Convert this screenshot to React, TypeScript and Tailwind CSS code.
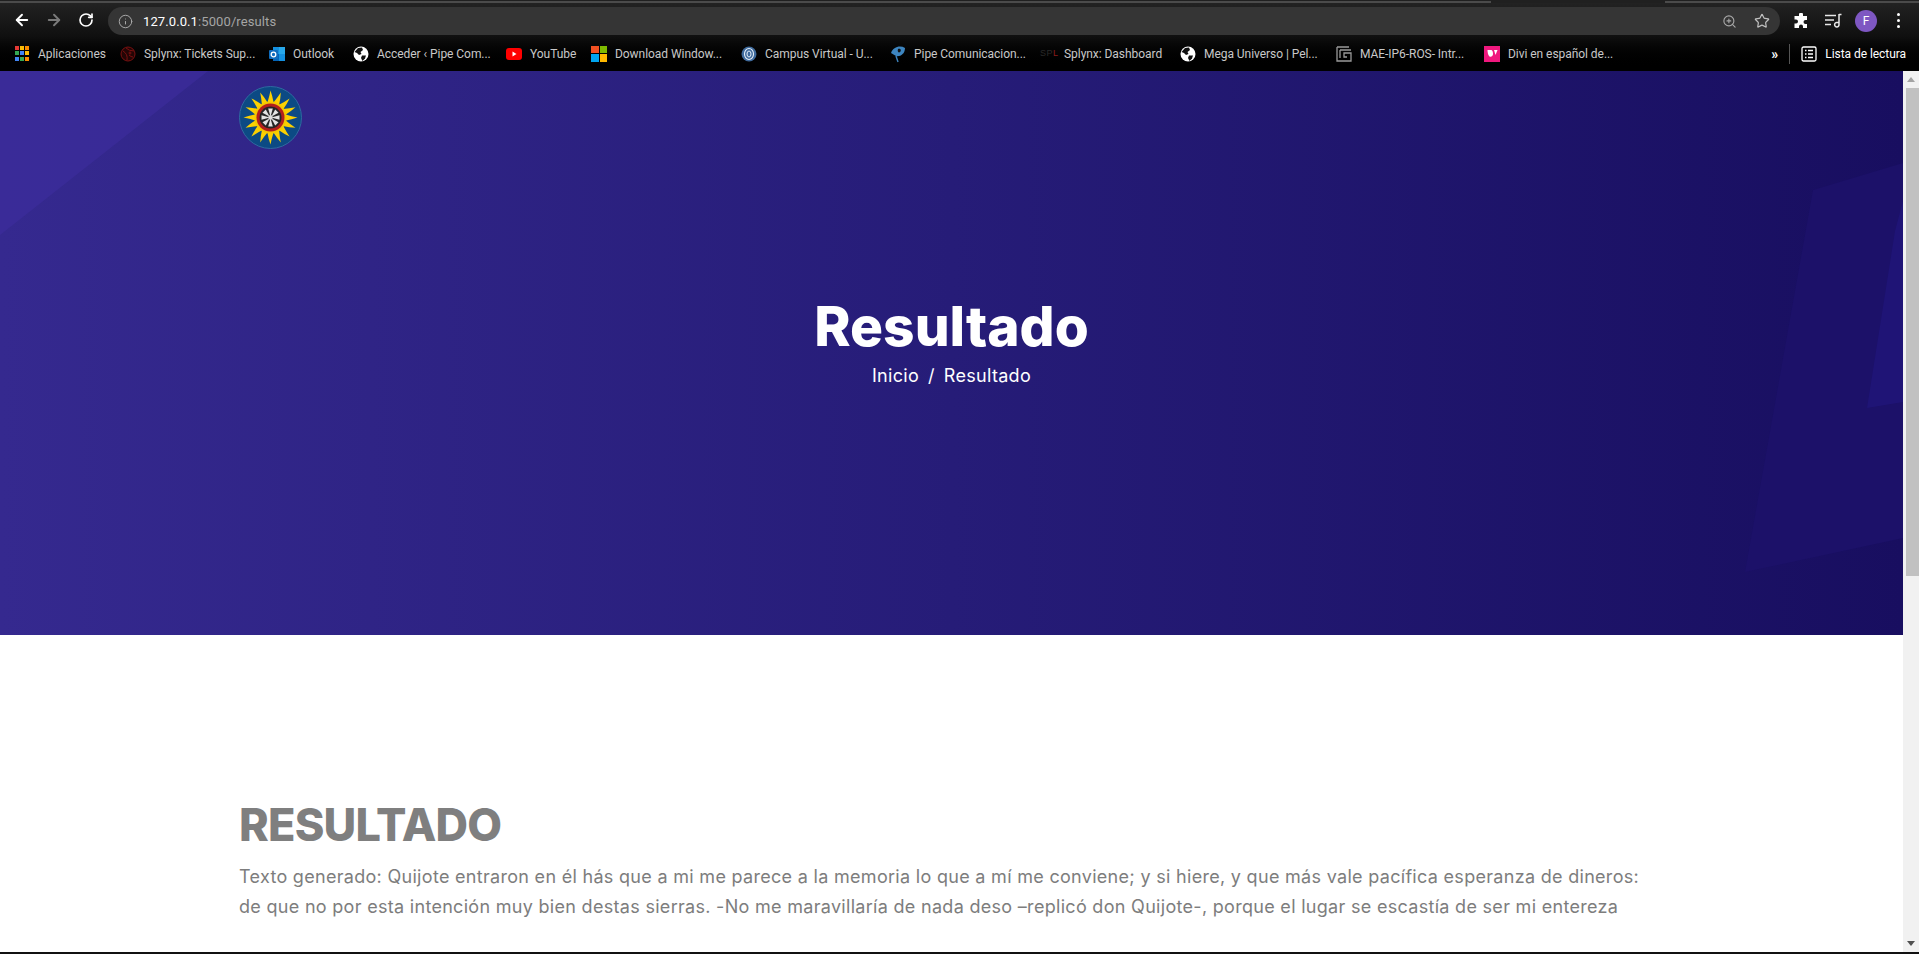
import { ArrowLeft, ArrowRight, RotateCw, Info, ZoomIn, Star } from "lucide-react";

const text = "font-['Roboto','Liberation_Sans',sans-serif]";

function GlobeIcon() {
  return (
    <svg width="16" height="16" viewBox="0 0 16 16">
      <circle cx="8" cy="8" r="7.5" fill="#fff" />
      <path d="M5 2 L9 1.5 L10 4 L7.5 6 L8.5 8 L6 9 L4 7 L1.5 6 Z" fill="#111" />
      <path d="M9 9.5 L13 9.5 L12 12.5 L9.5 15 L8 12 Z" fill="#111" />
    </svg>
  );
}

function AppsIcon() {
  const c = ["#e53935", "#fbbc05", "#fb8c00", "#34a853", "#4285f4", "#fbbc05", "#4285f4", "#34a853", "#fb8c00"];
  return (
    <div className="grid grid-cols-3 gap-[1px] w-[14px] h-[16px]">
      {c.map((x, i) => (
        <div key={i} className="w-[4px] h-[4px]" style={{ background: x }} />
      ))}
    </div>
  );
}

function SplynxIcon() {
  return (
    <svg width="16" height="16" viewBox="0 0 16 16" fill="none" stroke="#7a1010" strokeWidth="1">
      <circle cx="8" cy="8" r="7" fill="#230505" />
      <path d="M3 5 Q8 8 7 14 M6 2 Q9 5 14 5 M9 9 Q11 11 13 11" />
      <circle cx="10" cy="7" r="1" />
    </svg>
  );
}

function OutlookIcon() {
  return (
    <svg width="16" height="16" viewBox="0 0 16 16">
      <rect x="4" y="1" width="12" height="14" fill="#1490df" />
      <rect x="10" y="1" width="6" height="7" fill="#28a8ea" />
      <rect x="4" y="8" width="6" height="7" fill="#0364b8" />
      <rect x="0" y="4" width="9" height="9" rx="1" fill="#0f6cbd" />
      <circle cx="4.5" cy="8.5" r="2.3" fill="none" stroke="#fff" strokeWidth="1.3" />
    </svg>
  );
}

function YoutubeIcon() {
  return (
    <svg width="16" height="16" viewBox="0 0 16 16">
      <rect x="0" y="2" width="16" height="12" rx="3" fill="#f00" />
      <path d="M6.5 5.5 L10.5 8 L6.5 10.5 Z" fill="#fff" />
    </svg>
  );
}

function MsIcon() {
  return (
    <div className="grid grid-cols-2 gap-[1px] w-[16px] h-[16px]">
      <div className="bg-[#f25022]" />
      <div className="bg-[#7fba00]" />
      <div className="bg-[#00a4ef]" />
      <div className="bg-[#ffb900]" />
    </div>
  );
}

function CampusIcon() {
  return (
    <svg width="16" height="16" viewBox="0 0 16 16" fill="none">
      <circle cx="8" cy="8" r="7.5" fill="#3f6a9c" />
      <ellipse cx="8" cy="8" rx="4.5" ry="5.5" stroke="#e4eef8" strokeWidth="1.1" />
      <ellipse cx="8" cy="8" rx="2" ry="3" stroke="#e4eef8" strokeWidth="1" />
    </svg>
  );
}

function PipeIcon() {
  return (
    <svg width="16" height="18" viewBox="0 0 16 18" fill="none">
      <path d="M1 8 C3 2 10 0 15 3 C15 9 10 12 6 11 Z" fill="#3d85c0" />
      <path d="M8 4 C10 3 12 5 10 7 C9 8 7 7 8 4 Z" fill="#111" />
      <path d="M6 11 L8 17" stroke="#3d85c0" strokeWidth="1.4" />
    </svg>
  );
}

function SplIcon() {
  return (
    <span className="w-[16px] text-[9px] leading-none tracking-[0.5px] font-['Liberation_Sans',sans-serif]">
      <span className="text-[#2a2a2a]">SP</span>
      <span className="text-[#8a1c1c]">L</span>
    </span>
  );
}

function MaeIcon() {
  return (
    <svg width="16" height="16" viewBox="0 0 16 16" fill="none" stroke="#9a9a9a" strokeWidth="1.3">
      <path d="M1 1 H13 M1 1 V15 H15 V7 H8 V11 H11 M4 4 H15 M4 4 V12" />
    </svg>
  );
}

function DiviIcon() {
  return (
    <div className="w-[16px] h-[16px] bg-[#f0187e] flex items-center justify-center">
      <svg width="11" height="9" viewBox="0 0 11 9">
        <path d="M0.5 1 L4 1 C5.5 1 6 3 6 5 C6 7 4 8.5 2.5 7.5 C1 6.5 0.5 3 0.5 1 Z" fill="#fff" />
        <path d="M7 1 L10.5 1 L8.5 6 Z" fill="#fff" />
      </svg>
    </div>
  );
}

const bookmarks: { icon: React.ReactNode; label: string; w: string }[] = [
  { icon: <AppsIcon />, label: "Aplicaciones", w: "w-[106px]" },
  { icon: <SplynxIcon />, label: "Splynx: Tickets Sup...", w: "w-[149px]" },
  { icon: <OutlookIcon />, label: "Outlook", w: "w-[84px]" },
  { icon: <GlobeIcon />, label: "Acceder ‹ Pipe Com...", w: "w-[153px]" },
  { icon: <YoutubeIcon />, label: "YouTube", w: "w-[85px]" },
  { icon: <MsIcon />, label: "Download Window...", w: "w-[150px]" },
  { icon: <CampusIcon />, label: "Campus Virtual - U...", w: "w-[149px]" },
  { icon: <PipeIcon />, label: "Pipe Comunicacion...", w: "w-[150px]" },
  { icon: <SplIcon />, label: "Splynx: Dashboard", w: "w-[140px]" },
  { icon: <GlobeIcon />, label: "Mega Universo | Pel...", w: "w-[156px]" },
  { icon: <MaeIcon />, label: "MAE-IP6-ROS- Intr...", w: "w-[148px]" },
  { icon: <DiviIcon />, label: "Divi en español de...", w: "w-[130px]" },
];

function Logo() {
  const rays = Array.from({ length: 16 }, (_, i) => (i * 360) / 16);
  const spokes = Array.from({ length: 8 }, (_, i) => (i * 360) / 8);
  return (
    <svg width="63" height="63" viewBox="0 0 63 63">
      <circle cx="31.5" cy="31.5" r="31" fill="#0c4a84" stroke="#2f6aa0" strokeWidth="1" />
      {rays.map((r) => (
        <path key={r} d="M28.3 17 Q30.5 10 31.5 4.5 Q33.5 10 34.7 17 Z" fill="#fbd000" transform={`rotate(${r} 31.5 31.5)`} />
      ))}
      <circle cx="31.5" cy="31.5" r="16" fill="#f5c800" />
      <circle cx="31.5" cy="31.5" r="14" fill="#b3201c" />
      <circle cx="31.5" cy="31.5" r="11" fill="#262626" />
      {spokes.map((r) => (
        <path key={r} d="M31 29 L29.2 22.5 L33.8 22.5 L32 29 Z" fill="#e4e4e4" transform={`rotate(${r} 31.5 31.5)`} />
      ))}
      <circle cx="31.5" cy="31.5" r="2.4" fill="#dcdcdc" />
    </svg>
  );
}

export default function App() {
  return (
    <div className="w-[1919px] h-[954px] overflow-hidden flex flex-col bg-black">
      {/* top strip */}
      <div className="h-[3px] flex bg-[#202020]">
        <div className="w-[1491px] h-[2px] mt-[1px] bg-[#4b4b4b]" />
        <div className="w-[174px]" />
        <div className="flex-1 h-[2px] mt-[1px] bg-[#4b4b4b]" />
      </div>

      {/* toolbar */}
      <div className={`h-[33px] flex items-center pl-[13px] bg-gradient-to-b from-[#222222] to-[#101010] ${text}`}>
        <ArrowLeft size={18} strokeWidth={2.5} className="text-white" />
        <ArrowRight size={18} strokeWidth={2.5} className="text-[#7a7a7a] ml-[14px]" />
        <RotateCw size={16} strokeWidth={2.5} className="text-white ml-[15px]" />
        <div className="ml-[14px] w-[1672px] h-[28px] mt-[3px] rounded-full bg-[#353535] flex items-center pl-[10px] pr-[10px]">
          <Info size={15} strokeWidth={1.6} className="text-[#a8a8a8]" />
          <div className="ml-[10px] text-[13px] tracking-[0.1px] leading-none text-[#a5a5a5]">
            <span className="text-white">127.0.0.1</span>:5000/results
          </div>
          <div className="flex-1" />
          <ZoomIn size={15} strokeWidth={1.8} className="text-[#a8a8a8]" />
          <Star size={16} strokeWidth={1.8} className="text-[#c0c0c0] ml-[17px]" />
        </div>
        <svg width="16" height="16" viewBox="0 0 16 16" className="ml-[13px] mt-[2px]">
          <path d="M6 1.5 a2 2 0 0 1 4 0 V3 H14 V7 H12.5 a2 2 0 0 0 0 4 H14 V15 H10 V13.5 a2 2 0 0 0 -4 0 V15 H1.5 V10.5 H3 a2 2 0 0 0 0 -4 H1.5 V3 H6 Z" fill="#fff" />
        </svg>
        <svg width="17" height="16" viewBox="0 0 17 16" className="ml-[16px] mt-[2px]" fill="none" stroke="#e8e8e8" strokeWidth="1.5">
          <path d="M0 2.5 H11 M0 7 H9 M0 11.5 H6" />
          <path d="M14 1 V11.5 a2.2 2.2 0 1 1 -2 -2 H14" />
          <path d="M14 1.5 H16.5" />
        </svg>
        <div className="ml-[13px] mt-[2px] w-[22px] h-[22px] rounded-full bg-[#7e57c2] text-white text-[12px] flex items-center justify-center">
          F
        </div>
        <div className="ml-[20px] mt-[2px] flex flex-col gap-[3px]">
          <div className="w-[3px] h-[3px] rounded-full bg-white" />
          <div className="w-[3px] h-[3px] rounded-full bg-white" />
          <div className="w-[3px] h-[3px] rounded-full bg-white" />
        </div>
      </div>

      {/* bookmarks */}
      <div className={`h-[35px] flex items-center pl-[14px] bg-gradient-to-b from-[#101010] to-[#000000] text-[12px] tracking-[-0.05px] text-[#c8c8c8] ${text}`}>
        {bookmarks.map((b) => (
          <div key={b.label} className={`${b.w} shrink-0 flex items-center gap-[8px] whitespace-nowrap`}>
            <div className="w-[16px] h-[18px] shrink-0 flex items-center justify-center">{b.icon}</div>
            {b.label}
          </div>
        ))}
        <div className="flex-1" />
        <div className="text-white text-[14px] leading-none mr-[11px] font-bold">»</div>
        <div className="w-px h-[20px] bg-[#555555] mr-[11px]" />
        <svg width="16" height="16" viewBox="0 0 16 16" fill="none" stroke="#fff" strokeWidth="1.3">
          <rect x="1" y="1" width="14" height="14" rx="1.5" />
          <path d="M4 4.5 H5.5 M7 4.5 H12 M4 8 H5.5 M7 8 H12 M4 11.5 H5.5 M7 11.5 H12" />
        </svg>
        <div className="ml-[8px] mr-[13px] text-white">Lista de lectura</div>
      </div>

      {/* page */}
      <div className="h-[881px] flex bg-white">
        <div className="w-[1903px] overflow-hidden">
          <section className="relative h-[564px] bg-gradient-to-r from-[#35298f] via-[#261c78] to-[#180e60] overflow-hidden">
            <svg className="absolute inset-0" width="1903" height="564" viewBox="0 0 1903 564">
              <path d="M0 0 H208 L0 164 Z" fill="#3d2d9e" fillOpacity="0.6" />
              <path d="M1813 119 L1903 92 V467 L1745 501 Z" fill="#1c1169" />
              <path d="M1895 160 L1903 130 V331 L1867 337 Z" fill="#1f1476" />
            </svg>
            <div className="relative pl-[239px] pt-[15px]">
              <Logo />
            </div>
            <div className="relative text-center text-white mt-[143px] font-['Inter','Liberation_Sans',sans-serif]">
              <h1 className="text-[55px] leading-[68px] font-extrabold tracking-[0px]">Resultado</h1>
              <div className="mt-[2px] text-[18px] leading-[27px] tracking-[0.3px] flex justify-center gap-[9px]">
                <span>Inicio</span>
                <span>/</span>
                <span>Resultado</span>
              </div>
            </div>
          </section>
          <section className="pt-[163px] pl-[239px] font-['Inter','Liberation_Sans',sans-serif]">
            <h2 className="text-[45px] leading-[54px] font-extrabold tracking-[-0.8px] text-[#7f7f7f]">RESULTADO</h2>
            <p className="mt-[10px] w-[1440px] text-[18px] leading-[30px] tracking-[0.3px] text-[#7d7d7d]">
              Texto generado: Quijote entraron en él hás que a mi me parece a la memoria lo que a mí me conviene; y si hiere, y que más vale pacífica esperanza de dineros:
              <br />
              de que no por esta intención muy bien destas sierras. -No me maravillaría de nada deso –replicó don Quijote-, porque el lugar se escastía de ser mi entereza
            </p>
          </section>
        </div>
        {/* scrollbar */}
        <div className="w-[16px] bg-[#f1f1f1] flex flex-col items-center">
          <div className="h-[17px] flex items-center justify-center">
            <div className="w-0 h-0 border-x-[4px] border-x-transparent border-b-[5px] border-b-[#a3a3a3]" />
          </div>
          <div className="w-[13px] h-[488px] bg-[#c1c1c1] ml-[2px]" />
          <div className="flex-1" />
          <div className="h-[17px] flex items-center justify-center">
            <div className="w-0 h-0 border-x-[4px] border-x-transparent border-t-[5px] border-t-[#505050]" />
          </div>
        </div>
      </div>
      <div className="flex-1 bg-[#111111]" />
    </div>
  );
}
